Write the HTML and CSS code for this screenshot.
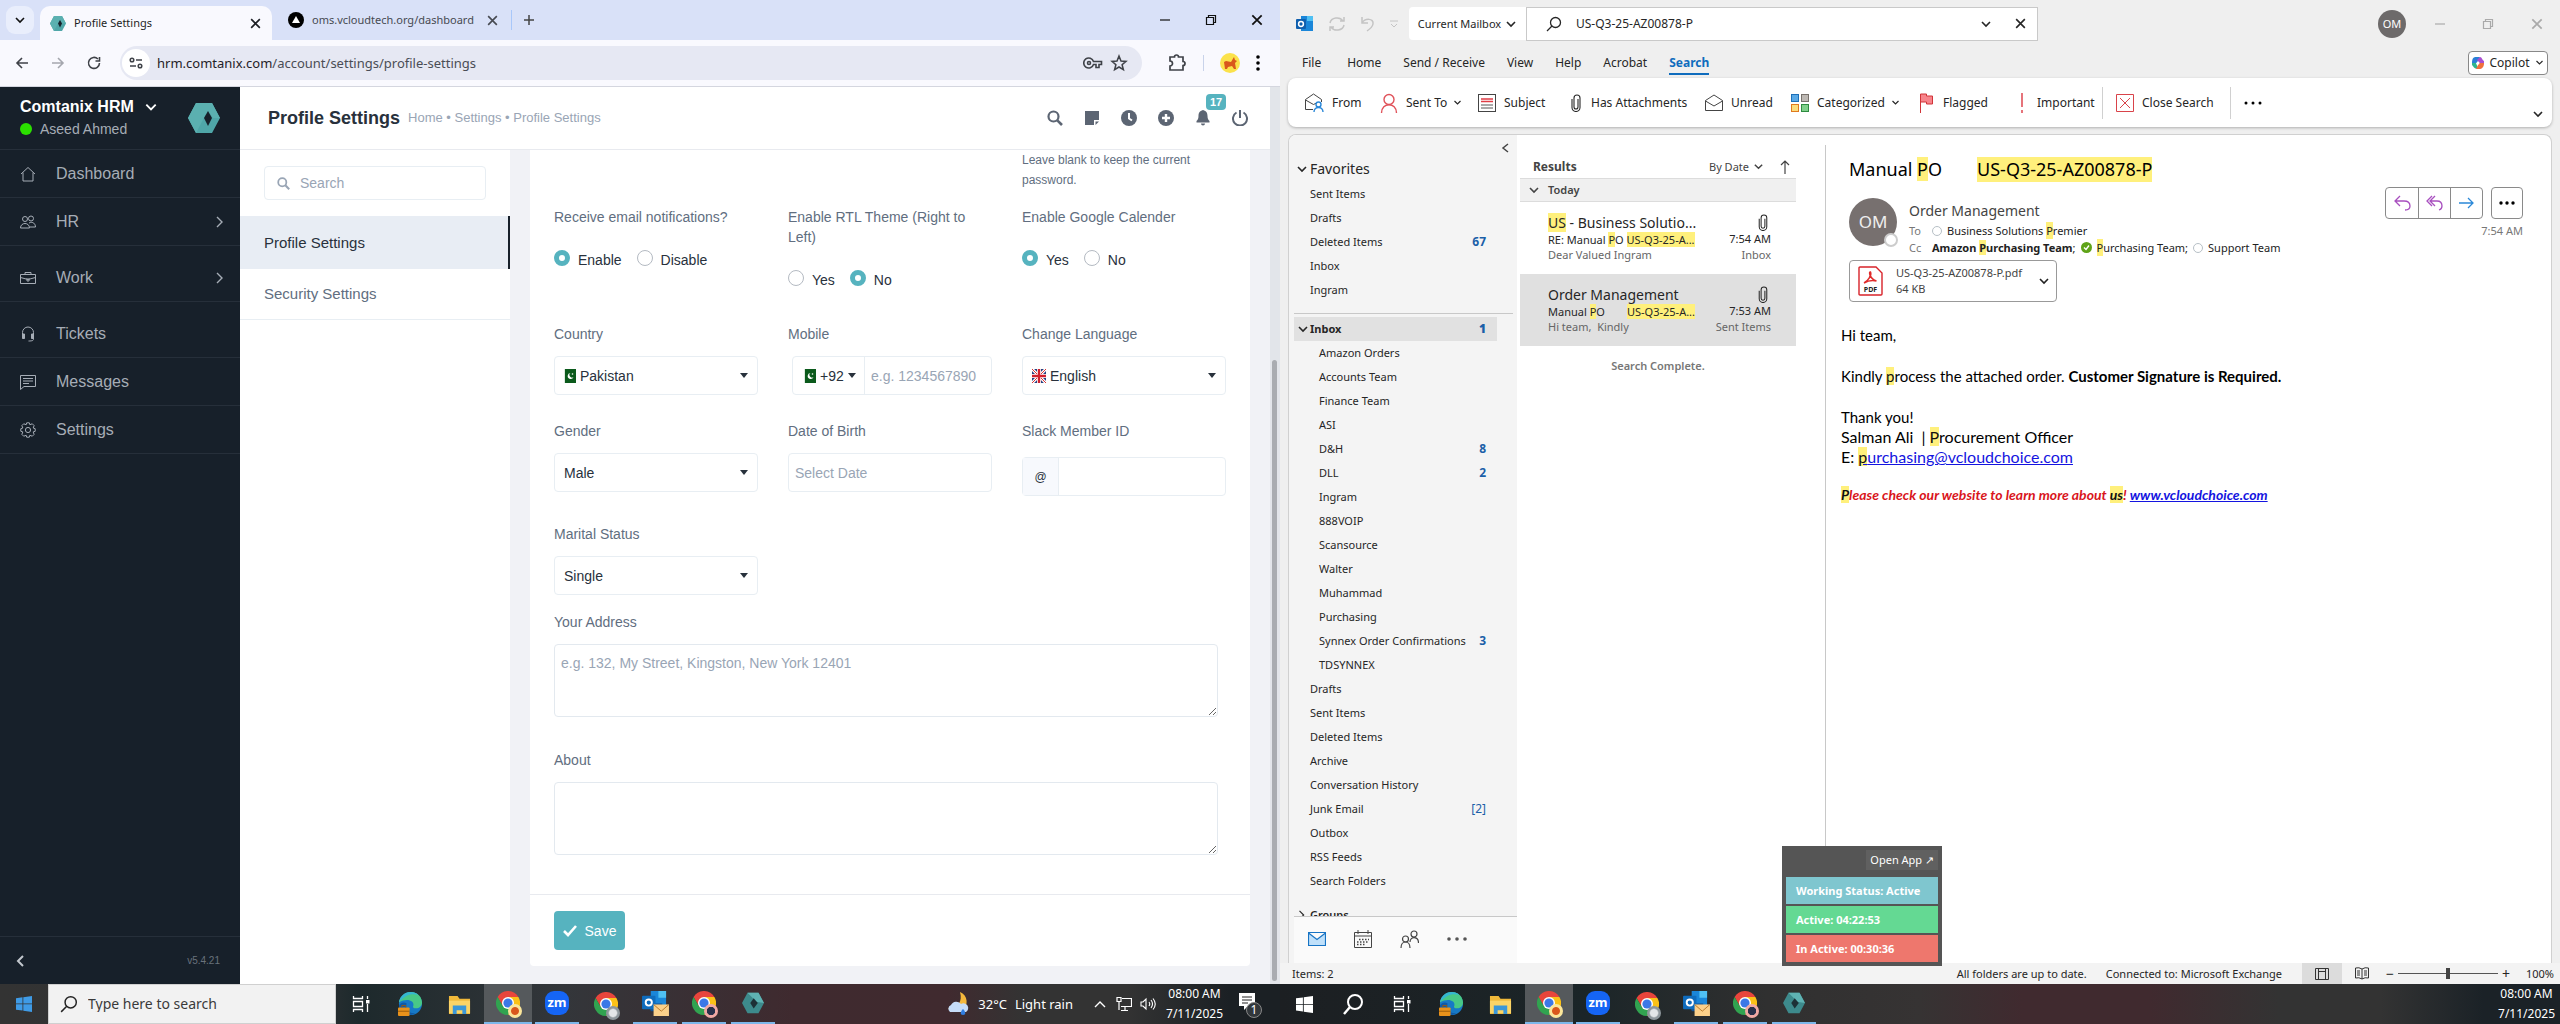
FILE: index.html
```html
<!DOCTYPE html>
<html lang="en">
<head>
<meta charset="utf-8">
<title>Profile Settings</title>
<link rel="stylesheet" href="styles.css">
</head>
<body>
<svg class="sprite" aria-hidden="true">
  <symbol id="i-down" viewBox="0 0 12 12"><path d="M2 4l4 4 4-4" fill="none" stroke="currentColor" stroke-width="1.6"/></symbol>
  <symbol id="i-right" viewBox="0 0 12 12"><path d="M3 1l5 5-5 5" fill="none" stroke="currentColor" stroke-width="1.4"/></symbol>
  <symbol id="i-left" viewBox="0 0 12 12"><path d="M8 1L3 6l5 5" fill="none" stroke="currentColor" stroke-width="2"/></symbol>
  <symbol id="i-caret" viewBox="0 0 8 5"><path d="M0 0h8L4 5z" fill="currentColor"/></symbol>
  <symbol id="i-x" viewBox="0 0 12 12"><path d="M2 2l8 8M10 2l-8 8" fill="none" stroke="currentColor" stroke-width="1.5"/></symbol>
  <symbol id="i-min" viewBox="0 0 12 12"><path d="M1 6h10" stroke="currentColor" stroke-width="1.2"/></symbol>
  <symbol id="i-max" viewBox="0 0 12 12"><path d="M1.500 3.500h7v7h-7zM3.500 3.500v-2h7v7h-2" fill="none" stroke="currentColor" stroke-width="1.2"/></symbol>
  <symbol id="i-hex" viewBox="0 0 32 30"><path d="M8 0h16l8 15-8 15H8L0 15z" fill="#4fa6a8"/><path d="M8 0h16l8 15-7 0-5-7-4 7-8 15L0 15z" fill="#5bb0b0"/><path d="M20 8l4 7-4 8-4-8z" fill="#17202a"/></symbol>
  <symbol id="i-hex-task" viewBox="0 0 32 30"><path d="M8 0h16l8 15-8 15H8L0 15z" fill="#3d8a8c"/><path d="M8 0h16l8 15-12-2-4-5z" fill="#5fb3b3"/><path d="M17 8l6 7-6 8-5-8z" fill="#1d3036"/></symbol>
  <symbol id="i-search" viewBox="0 0 16 16"><circle cx="6.500" cy="6.500" r="5" fill="none" stroke="currentColor" stroke-width="2.200"/><path d="M10.300 10.300l4.700 4.700" stroke="currentColor" stroke-width="2.600"/></symbol>
  <symbol id="i-lens" viewBox="0 0 16 16"><circle cx="9.500" cy="6.500" r="5" fill="none" stroke="currentColor" stroke-width="1.300"/><path d="M6 10l-5 5" stroke="currentColor" stroke-width="1.300"/></symbol>
  <symbol id="i-chrome" viewBox="0 0 24 24"><path d="M1.600 6A12 12 0 0 1 22.400 6H12L6.800 15z" fill="#e8453c"/><path d="M22.400 6A12 12 0 0 1 12 24l5.200-9L12 6z" fill="#fbc116"/><path d="M1.600 6A12 12 0 0 0 12 24l5.200-9H6.800z" fill="#31a350"/><circle cx="12" cy="12" r="6" fill="#fff"/><circle cx="12" cy="12" r="4.600" fill="#3b78e7"/></symbol>
  <symbol id="i-taskview" viewBox="0 0 18 18"><path d="M1.500 1v2.500h9V1M1.500 6.500h9v5h-9zM1.500 17v-2.500h9V17M15.500 1v3M15.500 9v8" fill="none" stroke="#fff" stroke-width="1.300"/><rect x="14" y="5" width="3.500" height="3.500" fill="#fff"/></symbol>
  <symbol id="i-edge" viewBox="0 0 26 26"><circle cx="13" cy="12" r="12" fill="#1779c6"/><path d="M1 11C2 4 8 0 13 0c8 0 12 6 12 11 0 4-3 6-6 6s-4-1-3-3c1-5-7-8-15-3z" fill="#48c887"/><path d="M1 11C2 4 8 0 13 0c3 0 6 1 8 3-7-2-14 0-20 8z" fill="#35b6d2"/><path d="M9 12c-2 6 3 11 9 10-6 4-16 1-17-8 2-3 5-4 8-2z" fill="#0f5aa8"/><rect x="0" y="16" width="12" height="9" rx="1" fill="#e8921b"/><path d="M4 16v-2h4v2M0 20h12" stroke="#9a5a0a" fill="none"/></symbol>
  <symbol id="i-files" viewBox="0 0 24 24"><path d="M1 3h9l2 3h11v16H1z" fill="#f0b93a"/><path d="M1 8h22v13H1z" fill="#fbd467"/><path d="M5 13h14v9h-4v-4H9v4H5z" fill="#3b97d8"/></symbol>
  <symbol id="i-outlook-task" viewBox="0 0 28 26"><rect x="9" y="0" width="16" height="20" fill="#1a86d9"/><rect x="17" y="0" width="8" height="7" fill="#4fc0f3"/><rect x="9" y="13" width="12" height="8" fill="#124f91"/><rect x="0" y="5" width="14" height="14" rx="1" fill="#0f6cbd"/><circle cx="7" cy="12" r="3.200" fill="none" stroke="#fff" stroke-width="2"/><rect x="12" y="14" width="16" height="12" fill="#fbd08a"/><path d="M12 14l8 7 8-7" fill="none" stroke="#b97a2c"/></symbol>
  <symbol id="i-pk" viewBox="0 0 12 14"><rect width="12" height="14" fill="#0b5a1c"/><rect width="1" height="14" fill="#dfe9e0"/><path d="M6.500 4a3 3 0 1 0 3 4 2.500 2.500 0 1 1-3-4z" fill="#fff"/><circle cx="8.500" cy="5" r=".8" fill="#fff"/></symbol>
  <symbol id="i-uk" viewBox="0 0 14 14"><rect width="14" height="14" fill="#27407f"/><path d="M0 0l14 14M14 0L0 14" stroke="#fff" stroke-width="3"/><path d="M0 0l14 14M14 0L0 14" stroke="#d33" stroke-width="1"/><path d="M7 0v14M0 7h14" stroke="#fff" stroke-width="4"/><path d="M7 0v14M0 7h14" stroke="#d0202e" stroke-width="2.400"/></symbol>
  <symbol id="i-clip" viewBox="0 0 10 18"><path d="M7 5v8a2 2 0 0 1-4 0V4a3 3 0 0 1 6 0v9.500a4 4 0 0 1-8 0V5" fill="none" stroke="currentColor" stroke-width="1.100"/></symbol>
  <symbol id="i-win" viewBox="0 0 16 16"><path d="M0 2.200l6.500-.9v6.200H0zM7.300 1.200L16 0v7.500H7.300zM0 8.300h6.500v6.300L0 13.700zM7.300 8.300H16V16l-8.700-1.200z" fill="currentColor"/></symbol>
</svg>

<div class="desktop">
  <!-- Left monitor: browser -->
  <section class="monitor">
    <div class="browser">
      <div class="tabstrip">
        <button class="tab-search" aria-label="Search tabs"><svg width="12" height="12"><use href="#i-down"/></svg></button>
        <div class="tab active">
          <svg width="16" height="15"><use href="#i-hex"/></svg>
          <span class="tab-title">Profile Settings</span>
          <svg width="13" height="13"><use href="#i-x"/></svg>
        </div>
        <div class="tab">
          <svg width="16" height="16" viewBox="0 0 16 16"><circle cx="8" cy="8" r="8" fill="#000"/><path d="M8 4l4 7H4z" fill="#fff"/></svg>
          <span class="tab-title">oms.vcloudtech.org/dashboard</span>
          <svg width="13" height="13"><use href="#i-x"/></svg>
        </div>
        <button class="new-tab" aria-label="New tab"><svg width="12" height="12" viewBox="0 0 12 12"><path d="M6 1v10M1 6h10" stroke="currentColor" stroke-width="1.500"/></svg></button>
        <div class="win-controls">
          <button aria-label="Minimize"><svg width="12" height="12"><use href="#i-min"/></svg></button>
          <button aria-label="Restore"><svg width="12" height="12"><use href="#i-max"/></svg></button>
          <button aria-label="Close"><svg width="14" height="14"><use href="#i-x"/></svg></button>
        </div>
      </div>
      <div class="toolbar">
        <button aria-label="Back"><svg width="16" height="16" viewBox="0 0 16 16"><path d="M14 8H3M8 3L3 8l5 5" fill="none" stroke="currentColor" stroke-width="1.600"/></svg></button>
        <button class="dim" aria-label="Forward"><svg width="16" height="16" viewBox="0 0 16 16"><path d="M2 8h11M8 3l5 5-5 5" fill="none" stroke="currentColor" stroke-width="1.600"/></svg></button>
        <button aria-label="Reload"><svg width="16" height="16" viewBox="0 0 16 16"><path d="M13.500 8a5.500 5.500 0 1 1-1.600-4M13.500 2v4h-4" fill="none" stroke="currentColor" stroke-width="1.600"/></svg></button>
        <div class="omnibox">
          <span class="site-info"><svg width="14" height="14" viewBox="0 0 14 14"><g fill="none" stroke="currentColor" stroke-width="1.500"><circle cx="3" cy="4" r="1.800"/><path d="M7 4h6M1 10h6"/><circle cx="11" cy="10" r="1.800"/></g></svg></span>
          <span class="url">hrm.comtanix.com<span class="path">/account/settings/profile-settings</span></span>
          <svg class="key" width="20" height="14" viewBox="0 0 20 14"><g fill="none" stroke="currentColor" stroke-width="1.600"><path d="M10.500 5.500a5 5 0 1 0 0 3H13v3h3v-3h2.500v-3z"/><circle cx="6" cy="7" r="1.500"/></g></svg>
          <svg width="18" height="18" viewBox="0 0 18 18"><path d="M9 2l2 5 5 .4-3.900 3.300 1.300 5L9 13l-4.400 2.700 1.300-5L2 7.400 7 7z" fill="none" stroke="currentColor" stroke-width="1.500"/></svg>
        </div>
        <div class="toolbar-end">
          <svg width="20" height="20" viewBox="0 0 20 20"><path d="M3 4h4.500a2 2 0 0 1 4 0H16v4.500a2 2 0 0 1 0 4V17H3v-4a2.500 2.500 0 0 0 0-5z" fill="none" stroke="currentColor" stroke-width="1.700"/></svg>
          <span class="bar"></span>
          <svg width="20" height="20" viewBox="0 0 20 20"><circle cx="10" cy="10" r="10" fill="#fbe24c"/><path d="M4 9l2-1 5 1 3-5 1 3 2 1-2 2 1 6h-2l-2-3-4 1-1 2H5z" fill="#d9571c"/></svg>
          <svg width="4" height="18" viewBox="0 0 4 18"><circle cx="2" cy="3" r="1.800"/><circle cx="2" cy="9" r="1.800"/><circle cx="2" cy="15" r="1.800"/></svg>
        </div>
      </div>

      <div class="page">
        <aside class="sidebar">
          <div class="brand">
            <div>
              <div class="brand-name">Comtanix HRM <svg width="14" height="14"><use href="#i-down"/></svg></div>
              <div class="brand-user"><span class="online"></span>Aseed Ahmed</div>
            </div>
            <svg width="32" height="30"><use href="#i-hex"/></svg>
          </div>
          <nav class="menu">
            <a href="#"><svg width="16" height="16" viewBox="0 0 16 16"><path d="M1 8l7-6.500L15 8M3 6.500V15h10V6.500" /></svg>Dashboard</a>
            <a href="#"><svg width="16" height="16" viewBox="0 0 16 16"><circle cx="5" cy="5" r="2.500"/><circle cx="11" cy="4.500" r="2.500"/><path d="M.5 14c0-6 9-6 9 0zM9 9c4-2 6.500 1 6.500 4H10"/></svg>HR<svg class="go" width="12" height="12"><use href="#i-right"/></svg></a>
            <a class="spaced" href="#"><svg width="16" height="16" viewBox="0 0 16 16"><path d="M.5 4.500h15v9H.5zM5 4.500v-2h6v2M.5 7.500l7.500 2 7.500-2M7 8v3h2V8"/></svg>Work<svg class="go" width="12" height="12"><use href="#i-right"/></svg></a>
            <a class="spaced" href="#"><svg width="16" height="16" viewBox="0 0 16 16"><path d="M2.500 8V6.500a5.500 5.500 0 0 1 11 0V13c0 1.500-1 2-5 2"/><path d="M2.500 8h2v4.500h-2zM11.500 8h2v4.500h-2z" fill="currentColor"/></svg>Tickets</a>
            <a href="#"><svg width="16" height="16" viewBox="0 0 16 16"><path d="M.5 1.500h15v11H4l-3.500 3zM3 4.500h10M3 7h10M3 9.500h6"/></svg>Messages</a>
            <a href="#"><svg width="16" height="16" viewBox="0 0 16 16"><circle cx="8" cy="8" r="2.600"/><path d="M6.700.8h2.600l.5 1.900 2.500-.9 1.800 1.800-.9 2.400 2 .7v2.600l-2 .6.900 2.500-1.800 1.800-2.500-.9-.5 1.900H6.700l-.5-1.900-2.500.9-1.800-1.800.9-2.500-2-.6V6.700l2-.7-.9-2.400 1.800-1.800 2.500.9z"/></svg>Settings</a>
          </nav>
          <div class="side-foot"><svg width="14" height="12"><use href="#i-left"/></svg><span>v5.4.21</span></div>
        </aside>

        <div class="content">
          <header class="page-head">
            <h1>Profile Settings</h1>
            <span class="crumbs">Home • Settings • Profile Settings</span>
            <div class="head-icons">
              <svg width="16" height="16"><use href="#i-search"/></svg>
              <svg width="16" height="16" viewBox="0 0 16 16"><path d="M1 1h14v9h-5v5H1z" fill="currentColor"/><path d="M11.500 11.500H15L11.500 15z" fill="currentColor"/></svg>
              <svg width="16" height="16" viewBox="0 0 16 16"><circle cx="8" cy="8" r="8" fill="currentColor"/><path d="M8 3v5.500l3 2" fill="none" stroke="#fff" stroke-width="2"/></svg>
              <svg width="16" height="16" viewBox="0 0 16 16"><circle cx="8" cy="8" r="8" fill="currentColor"/><path d="M8 4v8M4 8h8" stroke="#fff" stroke-width="2.400"/></svg>
              <span class="bell"><svg width="16" height="16" viewBox="0 0 16 16"><path d="M8 0c3.500 1 4.500 3 4.500 6 0 3 1 4 2 5v1.500h-13V11c1-1 2-2 2-5 0-3 1-5 4.500-6zM6 13.500h4a2 2 0 0 1-4 0z" fill="currentColor"/></svg><b>17</b></span>
              <svg width="16" height="16" viewBox="0 0 16 16"><path d="M4.500 2.500a7 7 0 1 0 7 0M8 0v8" fill="none" stroke="currentColor" stroke-width="2"/></svg>
            </div>
          </header>
          <div class="body">
            <aside class="subnav">
              <label class="subsearch"><svg width="13" height="13"><use href="#i-search"/></svg><input type="text" placeholder="Search" aria-label="Search settings"></label>
              <a class="current" href="#">Profile Settings</a>
              <a href="#">Security Settings</a>
            </aside>
            <form class="card">
              <div class="grid">
                <p class="hint">Leave blank to keep the current password.</p>
                <fieldset>
                  <legend>Receive email notifications?</legend>
                  <div class="radios"><label><input type="radio" name="mail" checked>Enable</label><label><input type="radio" name="mail">Disable</label></div>
                </fieldset>
                <fieldset>
                  <legend>Enable RTL Theme (Right to Left)</legend>
                  <div class="radios"><label><input type="radio" name="rtl">Yes</label><label><input type="radio" name="rtl" checked>No</label></div>
                </fieldset>
                <fieldset>
                  <legend>Enable Google Calender</legend>
                  <div class="radios"><label><input type="radio" name="cal" checked>Yes</label><label><input type="radio" name="cal">No</label></div>
                </fieldset>
                <div class="field"><label for="country">Country</label>
                  <div class="control"><svg width="12" height="14"><use href="#i-pk"/></svg><select id="country"><option>Pakistan</option></select><svg width="8" height="5"><use href="#i-caret"/></svg></div></div>
                <div class="field"><label for="mobile">Mobile</label>
                  <div class="control phone"><span class="code"><svg width="12" height="14"><use href="#i-pk"/></svg><select aria-label="Country code"><option>+92</option></select><svg width="8" height="5"><use href="#i-caret"/></svg></span><input id="mobile" type="text" placeholder="e.g. 1234567890"></div></div>
                <div class="field"><label for="lang">Change Language</label>
                  <div class="control"><svg width="14" height="14"><use href="#i-uk"/></svg><select id="lang"><option>English</option></select><svg width="8" height="5"><use href="#i-caret"/></svg></div></div>
                <div class="field tall"><label for="gender">Gender</label>
                  <div class="control"><select id="gender"><option>Male</option></select><svg width="8" height="5"><use href="#i-caret"/></svg></div></div>
                <div class="field tall"><label for="dob">Date of Birth</label>
                  <div class="control tight"><input id="dob" type="text" placeholder="Select Date"></div></div>
                <div class="field tall slack"><label for="slack">Slack Member ID</label>
                  <div class="control at"><span>@</span><input id="slack" type="text"></div></div>
                <div class="field"><label for="marital">Marital Status</label>
                  <div class="control"><select id="marital"><option>Single</option></select><svg width="8" height="5"><use href="#i-caret"/></svg></div></div>
              </div>
              <div class="area"><label for="address">Your Address</label><textarea id="address" placeholder="e.g. 132, My Street, Kingston, New York 12401"></textarea></div>
              <div class="area"><label for="about">About</label><textarea id="about"></textarea></div>
              <div class="card-foot"><button type="button" class="save"><svg width="14" height="12" viewBox="0 0 14 12"><path d="M1 6l4 4 8-9" fill="none" stroke="#fff" stroke-width="2.600"/></svg>Save</button></div>
            </form>
          </div>
        </div>
        <div class="scrollbar"><span></span></div>
      </div>
    </div>
    <footer class="taskbar">
      <button class="task start" aria-label="Start"><svg width="16" height="18"><use href="#i-win"/></svg></button>
      <label class="task-search"><svg width="18" height="18"><use href="#i-lens"/></svg><input type="text" placeholder="Type here to search" aria-label="Search Windows"></label>
      <div class="apps after-search">
        <button class="task" aria-label="Task view"><svg width="18" height="18"><use href="#i-taskview"/></svg></button>
        <button class="task" aria-label="Edge"><svg width="25" height="25"><use href="#i-edge"/></svg></button>
        <button class="task" aria-label="File Explorer"><svg width="23" height="23"><use href="#i-files"/></svg></button>
        <button class="task open now" aria-label="Chrome"><svg width="24" height="24"><use href="#i-chrome"/></svg><i class="dot corgi"></i></button>
        <button class="task open" aria-label="Zoom"><span class="zm">zm</span></button>
        <button class="task" aria-label="Chrome, work"><svg width="24" height="24"><use href="#i-chrome"/></svg><i class="dot grey"></i></button>
        <button class="task open" aria-label="Outlook"><svg width="27" height="25"><use href="#i-outlook-task"/></svg></button>
        <button class="task open" aria-label="Chrome, personal"><svg width="24" height="24"><use href="#i-chrome"/></svg><i class="dot pink"></i></button>
        <button class="task open" aria-label="Comtanix"><svg width="22" height="22"><use href="#i-hex-task"/></svg></button>
      </div>
      <div class="tray">
        <svg width="24" height="24" viewBox="0 0 24 24"><path d="M14 0c8 3 9 14 2 18-5 2-11 1-14-2 9 1 15-6 12-16z" fill="#f5b83c"/><path d="M4 20a4 4 0 0 1 1-7 6 6 0 0 1 10-1 4 4 0 0 1 5 8z" fill="#c6dcf8"/><path d="M17 17c3 3 3 6 0 6s-3-3 0-6z" fill="#2f7de0"/></svg>
        <span>32°C</span><span>Light rain</span>
        <svg class="up" width="12" height="12" viewBox="0 0 12 12"><path d="M1 9l5-5 5 5" fill="none" stroke="#fff" stroke-width="1.400"/></svg>
        <svg width="16" height="16" viewBox="0 0 16 16"><path d="M6 2.500h9.500v8H5M9 10.500v4M5 14.500h7M1 1.500h4v4H1zM3 6v8" fill="none" stroke="#fff" stroke-width="1.200"/></svg>
        <svg width="16" height="16" viewBox="0 0 16 16"><path d="M1 6h2l3-3v10l-3-3H1zM9 6q1.500 2 0 4M11 4q3 4 0 8M13 2.500q4.500 5.500 0 11" fill="none" stroke="#fff" stroke-width="1.100"/></svg>
        <time>08:00 AM<br>7/11/2025</time>
        <svg class="note" width="24" height="26" viewBox="0 0 24 26"><path d="M0 0h16v13H9l-4 4v-4H0z" fill="#fff"/><path d="M3 4h10M3 7h10M3 10h6" stroke="#222"/><circle cx="15" cy="17" r="7.500" fill="#32373b" stroke="#888"/><text x="15" y="21" text-anchor="middle" class="count">1</text></svg>
      </div>
    </footer>
  </section>

  <!-- Right monitor: mail -->
  <section class="monitor right">
    <div class="mail">
      <div class="m-title">
        <div class="quick">
          <svg width="18" height="16" viewBox="0 0 18 16"><rect x="5" width="12" height="15" fill="#1a86d9"/><rect x="11" width="6" height="5" fill="#4fc0f3"/><rect y="3" width="10" height="10" rx="1" fill="#0f5fae"/><circle cx="5" cy="8" r="2.400" fill="none" stroke="#fff" stroke-width="1.500"/></svg>
          <svg width="18" height="16" viewBox="0 0 18 16"><path d="M2 7a7 6 0 0 1 13-2M16 1v4h-4M16 9a7 6 0 0 1-13 2M2 15v-4h4" fill="none" stroke="#c4c4c4" stroke-width="1.500"/></svg>
          <svg width="16" height="16" viewBox="0 0 16 16"><path d="M2 1v6h6M2 7c3-5 12-5 11 1-.5 3-3 5-6 7" fill="none" stroke="#c4c4c4" stroke-width="1.500"/></svg>
          <svg width="8" height="8" viewBox="0 0 8 8"><path d="M0 1h8M1 4l3 3 3-3" fill="none" stroke="#c4c4c4"/></svg>
        </div>
        <button class="scope">Current Mailbox <svg width="12" height="12"><use href="#i-down"/></svg></button>
        <label class="m-search"><svg width="16" height="16"><use href="#i-lens"/></svg><input type="text" value="US-Q3-25-AZ00878-P" aria-label="Search mail"><svg width="12" height="12"><use href="#i-down"/></svg><svg width="13" height="13"><use href="#i-x"/></svg></label>
        <div class="m-controls"><span class="me">OM</span><svg width="12" height="12"><use href="#i-min"/></svg><svg width="12" height="12"><use href="#i-max"/></svg><svg width="14" height="14"><use href="#i-x"/></svg></div>
      </div>
      <div class="m-tabs">
        <a class="first" href="#">File</a><a href="#">Home</a><a href="#">Send / Receive</a><a href="#">View</a><a href="#">Help</a><a href="#">Acrobat</a><a class="sel" href="#">Search</a>
        <button class="copilot"><svg width="12" height="12" viewBox="0 0 12 12"><path d="M4 0h4l-3 6H0c0-4 1-6 4-6z" fill="#2b7fd6"/><path d="M8 0c2 0 2 3 4 4v3H8L5 3z" fill="#a94fd0"/><path d="M0 6h4l2 5c-3 2-4-1-6-3z" fill="#2fb58e"/><path d="M12 6c0 4-2 6-5 6H4l3-6z" fill="#f0703c"/><circle cx="6" cy="6" r="1.500" fill="#fff"/></svg>Copilot<svg width="9" height="9"><use href="#i-down"/></svg></button>
      </div>
      <div class="ribbon">
        <button><svg width="20" height="20" viewBox="0 0 20 20"><path d="M9 16.500H1.500V6.500L9.500 1l8 5.500V9M1.500 7l8 4.500 4-2" fill="none" stroke="#444"/><circle cx="14.500" cy="11.500" r="2.500" fill="none" stroke="#2b88d8" stroke-width="1.400"/><path d="M10 19c0-6 9-6 9 0" fill="none" stroke="#2b88d8" stroke-width="1.400"/></svg>From</button>
        <button><svg width="18" height="20" viewBox="0 0 18 20"><circle cx="9" cy="6.500" r="5" fill="none" stroke="#e0525a" stroke-width="1.400"/><path d="M1.500 20c0-11 15-11 15 0" fill="none" stroke="#e0525a" stroke-width="1.400"/></svg>Sent To<svg class="mini" width="9" height="9"><use href="#i-down"/></svg></button>
        <button><svg width="18" height="18" viewBox="0 0 18 18"><rect x=".5" y=".5" width="17" height="17" fill="#fff" stroke="#444"/><path d="M3 5h12M3 7.500h12" stroke="#e03c45" stroke-width="1.500"/><path d="M3 11h12M3 14h12" stroke="#555"/></svg>Subject</button>
        <button><svg width="14" height="18"><use href="#i-clip"/></svg>Has Attachments</button>
        <button><svg width="18" height="18" viewBox="0 0 18 18"><path d="M.5 6.500L9 1l8.500 5.500v10H.5zM.5 7L9 12l8.500-5" fill="none" stroke="#444"/></svg>Unread</button>
        <button><svg width="18" height="18" viewBox="0 0 18 18"><rect x=".5" y=".5" width="7" height="7" fill="#5aa9e6" stroke="#1d6fb8"/><rect x="10.500" y=".5" width="7" height="7" fill="#bdb8b3" stroke="#77716c"/><rect x=".5" y="10.500" width="7" height="7" fill="#fbdd7d" stroke="#e07a1f"/><rect x="10.500" y="10.500" width="7" height="7" fill="#7fd08a" stroke="#2e8b40"/></svg>Categorized<svg class="mini" width="9" height="9"><use href="#i-down"/></svg></button>
        <button><svg width="24" height="20" viewBox="0 0 24 20"><path d="M9.500 20V1h6v2h6v8h-6V9h-6" fill="#f7848b" stroke="#d13438"/></svg>Flagged</button>
        <button><svg width="14" height="20" viewBox="0 0 14 20"><path d="M7 0v14M7 17v3" stroke="#e0525a" stroke-width="1.600"/></svg>Important</button>
        <button class="ruled"><svg width="18" height="18" viewBox="0 0 18 18"><path d="M.5.5h17v17H.5zM4 4l10 10M14 4L4 14" fill="none" stroke="#d9434a"/></svg>Close Search</button>
        <button class="ruled" aria-label="More commands"><svg width="18" height="4" viewBox="0 0 18 4"><circle cx="2" cy="2" r="1.500"/><circle cx="9" cy="2" r="1.500"/><circle cx="16" cy="2" r="1.500"/></svg></button>
        <svg class="expand" width="12" height="12"><use href="#i-down"/></svg>
      </div>

      <div class="m-main">
        <nav class="folders">
          <div class="scroll">
            <div class="fold"><svg width="10" height="10" viewBox="0 0 10 10"><path d="M8 1L3 5l5 4" fill="none" stroke="#444" stroke-width="1.500"/></svg></div>
            <div class="group"><svg width="12" height="12"><use href="#i-down"/></svg>Favorites</div>
            <a href="#">Sent Items</a><a href="#">Drafts</a><a href="#">Deleted Items<b>67</b></a><a href="#">Inbox</a><a href="#">Ingram</a>
            <hr>
            <a class="inbox" href="#"><svg width="12" height="12"><use href="#i-down"/></svg>Inbox<b>1</b></a>
            <div class="sub">
              <a href="#">Amazon Orders</a><a href="#">Accounts Team</a><a href="#">Finance Team</a><a href="#">ASI</a><a href="#">D&amp;H<b>8</b></a><a href="#">DLL<b>2</b></a><a href="#">Ingram</a><a href="#">888VOIP</a><a href="#">Scansource</a><a href="#">Walter</a><a href="#">Muhammad</a><a href="#">Purchasing</a><a href="#">Synnex Order Confirmations<b>3</b></a><a href="#">TDSYNNEX</a>
            </div>
            <a href="#">Drafts</a><a href="#">Sent Items</a><a href="#">Deleted Items</a><a href="#">Archive</a><a href="#">Conversation History</a><a href="#">Junk Email<b class="light">[2]</b></a><a href="#">Outbox</a><a href="#">RSS Feeds</a><a href="#">Search Folders</a>
            <a class="groups" href="#"><svg width="10" height="10"><use href="#i-right"/></svg>Groups</a>
          </div>
          <div class="modules">
            <svg width="18" height="14" viewBox="0 0 18 14"><path d="M.5.5h17v13H.5zM.5 1L9 7.500 17.500 1" fill="#bfe0fa" stroke="#1673c4" stroke-width="1.200"/></svg>
            <svg width="18" height="18" viewBox="0 0 18 18"><path d="M.5 2.500h17v15H.5zM.5 6h17M4 0v4M14 0v4" fill="none" stroke="#444"/><path d="M5 9.500h10M3 12h12M3 14.500h8" stroke="#444" stroke-width="1.300" stroke-dasharray="1.500 1.500"/></svg>
            <svg width="19" height="18" viewBox="0 0 19 18"><g fill="none" stroke="#444" stroke-width="1.200"><circle cx="5.500" cy="9" r="3"/><path d="M1 18c0-8 9-8 9 0"/><circle cx="14" cy="4" r="3"/><path d="M10 12c0-6 8.500-6 8.500 1"/></g></svg>
            <svg width="20" height="4" viewBox="0 0 20 4" fill="#555"><circle cx="2" cy="2" r="1.800"/><circle cx="10" cy="2" r="1.800"/><circle cx="18" cy="2" r="1.800"/></svg>
          </div>
        </nav>

        <div class="list">
          <div class="list-head"><b>Results</b><span>By Date <svg width="11" height="11"><use href="#i-down"/></svg></span><svg width="10" height="14" viewBox="0 0 10 14"><path d="M5 14V1M1 5l4-4 4 4" fill="none" stroke="#444" stroke-width="1.200"/></svg></div>
          <div class="today"><svg width="12" height="12"><use href="#i-down"/></svg>Today</div>
          <article class="msg">
            <div class="brief"><h3><mark>US</mark> - Business Solutio...</h3><p>RE: Manual <mark>P</mark>O <mark>US-Q3-25-A...</mark></p><p class="prev">Dear Valued Ingram</p></div>
            <div class="meta"><svg width="10" height="17"><use href="#i-clip"/></svg><span>7:54 AM</span><em>Inbox</em></div>
          </article>
          <article class="msg chosen">
            <div class="brief"><h3>Order Management</h3><p class="split"><span>Manual <mark>P</mark>O</span><mark>US-Q3-25-A...</mark></p><p class="prev">Hi team,&nbsp; Kindly</p></div>
            <div class="meta"><svg width="10" height="17"><use href="#i-clip"/></svg><span>7:53 AM</span><em>Sent Items</em></div>
          </article>
          <p class="done">Search Complete.</p>
        </div>

        <article class="reader">
          <h2><span>Manual <mark>P</mark>O</span><mark>US-Q3-25-AZ00878-P</mark></h2>
          <div class="from">
            <span class="avatar">OM<i></i></span>
            <div class="people">
              <div class="who">Order Management</div>
              <div class="to"><span class="k">To</span><i class="pres"></i>Business Solutions <mark>P</mark>remier</div>
              <div class="to"><span class="k">Cc</span><b>Amazon <mark>P</mark>urchasing Team</b>;<svg width="11" height="11" viewBox="0 0 11 11"><circle cx="5.500" cy="5.500" r="5.500" fill="#5fa318"/><path d="M3 5.500l2 2 3-4" fill="none" stroke="#fff" stroke-width="1.400"/></svg><mark>P</mark>urchasing Team;<i class="pres"></i>Support Team</div>
            </div>
            <div class="acts">
              <div class="act-row">
                <div class="trio">
                  <button aria-label="Reply"><svg width="17" height="16" viewBox="0 0 17 16"><path d="M6 1L1 6l5 5M1 6h9q6 0 6 5 0 4-5 4" fill="none" stroke="#a84fbf" stroke-width="1.300"/></svg></button>
                  <button aria-label="Reply all"><svg width="17" height="16" viewBox="0 0 17 16"><path d="M6 1L1 6l5 5M9 1L4 6l5 5M4 6h7q5 0 5 5 0 3-3 4" fill="none" stroke="#a84fbf" stroke-width="1.300"/></svg></button>
                  <button aria-label="Forward"><svg width="17" height="12" viewBox="0 0 17 12"><path d="M1 6h14M10 1l5 5-5 5" fill="none" stroke="#2b88d8" stroke-width="1.300"/></svg></button>
                </div>
                <button class="more" aria-label="More actions"><svg width="16" height="4" viewBox="0 0 16 4"><circle cx="2" cy="2" r="1.700"/><circle cx="8" cy="2" r="1.700"/><circle cx="14" cy="2" r="1.700"/></svg></button>
              </div>
              <time>7:54 AM</time>
            </div>
          </div>
          <div class="attach">
            <svg width="25" height="30" viewBox="0 0 25 30"><path d="M2 1h16l6 6v21q0 1-1 1H2q-1 0-1-1V2q0-1 1-1z" fill="#fff" stroke="#d8232a" stroke-width="1.400"/><path d="M6 17c4-2 8-8 6.500-11-2-1-1 7 6 9-4-1-9 0-12.500 2z" fill="none" stroke="#e02b2b" stroke-width="1.500"/><text x="12.500" y="26" text-anchor="middle" class="pdf">PDF</text></svg>
            <div class="file">US-Q3-25-AZ00878-P.pdf<br>64 KB</div>
            <svg width="12" height="12"><use href="#i-down"/></svg>
          </div>
          <div class="letter">
            <p class="gap">Hi team,</p>
            <p class="gap">Kindly <mark>p</mark>rocess the attached order. <b>Customer Signature is Required.</b></p>
            <p>Thank you!</p>
            <p class="sign-off">Salman Ali &nbsp;| <mark>P</mark>rocurement Officer</p>
            <p class="sign-off">E: <a href="#"><mark>p</mark>urchasing@vcloudchoice.com</a></p>
            <p class="promo"><mark>P</mark>lease check our website to learn more about <mark>us</mark>! <a href="#">www.vcloudchoice.com</a></p>
          </div>
        </article>
      </div>

      <div class="status">
        <span>Items: 2</span>
        <span class="push">All folders are up to date.</span>
        <span class="conn">Connected to: Microsoft Exchange</span>
        <span class="view on"><svg width="14" height="12" viewBox="0 0 14 12"><path d="M.5.5h13v11H.5zM3.500.5v11M10.500.5v11M3.500 3.500h7" fill="none" stroke="#333"/></svg></span>
        <span class="view"><svg width="14" height="13" viewBox="0 0 14 13"><path d="M7 2Q4 0 .5 1v10q3.500-1 6.500 1 3-2 6.500-1V1Q10 0 7 2zv10M2 4h3M2 6h3M2 8h3M9 4h3M9 6h3M9 8h3" fill="none" stroke="#333"/></svg></span>
        <span class="sign">−</span><input type="range" aria-label="Zoom"><span class="sign">+</span><span class="pct">100%</span>
      </div>
    </div>
    <footer class="taskbar alt">
      <div class="apps">
        <button class="task" aria-label="Start"><svg width="17" height="17"><use href="#i-win"/></svg></button>
        <button class="task" aria-label="Search"><svg width="22" height="22" viewBox="0 0 22 22"><circle cx="13" cy="9" r="7" fill="none" stroke="#fff" stroke-width="2"/><path d="M8 14l-6 7" stroke="#fff" stroke-width="2.400"/></svg></button>
        <button class="task" aria-label="Task view"><svg width="18" height="18"><use href="#i-taskview"/></svg></button>
        <button class="task" aria-label="Edge"><svg width="25" height="25"><use href="#i-edge"/></svg></button>
        <button class="task" aria-label="File Explorer"><svg width="23" height="23"><use href="#i-files"/></svg></button>
        <button class="task open now" aria-label="Chrome"><svg width="24" height="24"><use href="#i-chrome"/></svg><i class="dot corgi"></i></button>
        <button class="task open" aria-label="Zoom"><span class="zm">zm</span></button>
        <button class="task" aria-label="Chrome, work"><svg width="24" height="24"><use href="#i-chrome"/></svg><i class="dot grey"></i></button>
        <button class="task open" aria-label="Outlook"><svg width="27" height="25"><use href="#i-outlook-task"/></svg></button>
        <button class="task open" aria-label="Chrome, personal"><svg width="24" height="24"><use href="#i-chrome"/></svg><i class="dot pink"></i></button>
        <button class="task open" aria-label="Comtanix"><svg width="22" height="22"><use href="#i-hex-task"/></svg></button>
      </div>
      <div class="tray"><time>08:00 AM<br>7/11/2025</time></div>
    </footer>
    <div class="tracker">
      <button>Open App ↗</button>
      <div class="working">Working Status: Active</div>
      <div class="up">Active: 04:22:53</div>
      <div class="idle">In Active: 00:30:36</div>
    </div>
  </section>
</div>
</body>
</html>
```
FILE: styles.css
```css
* { box-sizing: border-box; }
body { margin: 0; font: 12px/16px "Noto Sans", "Open Sans", sans-serif; color: #262626; }
button, input, select, textarea { font: inherit; color: inherit; border: 0; background: none; padding: 0; margin: 0; outline: 0; }
a { color: inherit; text-decoration: none; }
h1, h2, h3, p { margin: 0; font-weight: 400; }
svg { flex: none; display: block; }
button { display: flex; align-items: center; justify-content: center; }
mark { background: #fff07c; color: inherit; }
.sprite { position: absolute; width: 0; height: 0; }

.desktop { display: grid; grid-template-columns: 1fr 1fr; min-height: 100vh; }
.monitor { display: flex; flex-direction: column; min-width: 0; position: relative; }

/* Browser chrome */
.browser { flex: 1; display: flex; flex-direction: column; background: #f9f9fe; }
.tabstrip { height: 40px; background: #d9e1f8; display: flex; align-items: center; padding-left: 6px; }
.tab-search { width: 28px; height: 28px; border-radius: 9px; background: #e9eefc; color: #111; }
.tab { display: flex; align-items: center; gap: 8px; width: 232px; height: 34px; padding: 0 10px; color: #474a52; align-self: flex-end; margin-left: 6px; font-size: 11px; }
.tab + .tab { border-right: 1px solid #a8c7fa; height: 20px; align-self: center; padding: 0 12px 0 8px; margin-left: 8px; }
.tab.active { background: #f9f9fe; border-radius: 10px 10px 0 0; color: #1d1f25; }
.tab-title { flex: 1; white-space: nowrap; }
.new-tab { width: 34px; color: #444; }
.win-controls { margin-left: auto; display: flex; }
.win-controls button { width: 46px; height: 40px; color: #111; }
.toolbar { height: 47px; display: flex; align-items: center; padding: 0 0 1px 4px; border-bottom: 1px solid #d4d6df; color: #3f4248; }
.toolbar > button { width: 36px; }
.dim { color: #a5a7ae; }
.omnibox { flex: 1; height: 34px; margin-left: 8px; border-radius: 17px; background: #e6e8f3; display: flex; align-items: center; padding: 0 14px 0 2px; gap: 7px; }
.site-info { width: 28px; height: 28px; border-radius: 50%; background: #fff; display: flex; align-items: center; justify-content: center; }
.url { flex: 1; font-size: 13px; color: #1f2127; }
.path { color: #4a4d55; }
.toolbar-end { display: flex; align-items: center; gap: 16px; padding: 0 20px 0 25px; }
.toolbar-end .bar { width: 1px; height: 16px; background: #c9d3ea; }

/* HRM page */
.page { flex: 1; display: flex; font-family: "Liberation Sans", Arial, sans-serif; background: #f1f2f6; }
.sidebar { width: 240px; flex: none; background: #17202a; color: #a6adb6; display: flex; flex-direction: column; }
.brand { height: 63px; display: flex; justify-content: space-between; align-items: center; padding: 0 20px; border-bottom: 1px solid #262f3a; }
.brand-name { display: flex; align-items: center; gap: 10px; color: #fff; font-size: 16px; line-height: 22px; font-weight: 700; }
.brand-user { display: flex; align-items: center; gap: 8px; font-size: 14px; line-height: 22px; }
.online { width: 12px; height: 12px; border-radius: 50%; background: #2be000; }
.menu a { display: flex; align-items: center; gap: 20px; height: 48px; padding: 0 14px 0 20px; font-size: 16px; border-bottom: 1px solid #262f3a; }
.menu a svg { fill: none; stroke: currentColor; }
.menu a.spaced { height: 56px; padding-top: 8px; }
.menu .go { margin-left: auto; }
.side-foot { margin-top: auto; height: 48px; border-top: 1px solid #262f3a; display: flex; align-items: center; justify-content: space-between; padding: 0 20px 0 14px; font-size: 10px; color: #69727c; }
.side-foot svg { color: #c3c8ce; }
.content { flex: 1; display: flex; flex-direction: column; min-width: 0; }
.page-head { height: 63px; background: #fff; border-bottom: 1px solid #e8eaef; display: flex; align-items: center; gap: 8px; padding: 0 22px 0 28px; }
.page-head h1 { font-size: 18px; font-weight: 700; color: #28313c; }
.crumbs { color: #99a5b5; font-size: 13px; }
.head-icons { margin-left: auto; display: flex; gap: 21px; color: #5c6573; }
.bell { position: relative; }
.bell b { position: absolute; left: 11px; top: -16px; width: 20px; height: 16px; border-radius: 4px; background: #56b3bf; color: #fff; font-size: 11px; text-align: center; }
.body { flex: 1; display: flex; }
.subnav { width: 270px; flex: none; background: #fff; color: #616e80; }
.subsearch { display: flex; align-items: center; gap: 10px; height: 34px; margin: 16px 24px; padding: 0 12px; border: 1px solid #e8eef3; border-radius: 4px; color: #99a5b5; font-size: 14px; }
.subsearch input { width: 100%; }
input::placeholder, textarea::placeholder { color: #99a5b5; opacity: 1; }
.subnav a { display: flex; align-items: center; height: 51px; padding-left: 24px; font-size: 15px; border-bottom: 1px solid #e8eef3; }
.subnav a.current { height: 53px; background: #e8edf4; color: #28313c; border-right: 2px solid #17202a; border-bottom: 0; }
.card { flex: 1; margin: 0 20px 18px; background: #fff; border-radius: 0 0 4px 4px; font-size: 14px; line-height: 20px; color: #28313c; }
.grid { display: grid; grid-template-columns: repeat(3, 1fr); column-gap: 30px; padding: 0 24px; }
.hint { grid-column: 3; font-size: 12px; color: #616e80; height: 57px; }
fieldset { border: 0; margin: 0; padding: 0; min-width: 0; height: 117px; }
legend, .field label, .area label { padding: 0; color: #616e80; display: block; }
.radios { display: flex; gap: 15px; padding-top: 23px; }
.radios label { display: flex; align-items: center; gap: 8px; }
.radios input { appearance: none; width: 16px; height: 16px; border: 1px solid #b4bac2; border-radius: 50%; margin-top: -4px; }
.radios input:checked { border: 5px solid #56b3bf; }
.field { height: 97px; }
.field.tall { height: 103px; }
.field label { margin-bottom: 12px; }
.slack label { margin-bottom: 16px; }
.control { display: flex; align-items: center; gap: 4px; height: 39px; padding: 0 9px; border: 1px solid #e8eef3; border-radius: 4px; }
.control select { appearance: none; flex: 1; min-width: 0; }
.control input { width: 100%; min-width: 0; }
.control.tight { padding: 0 6px; }
.phone { padding: 0 0 0 11px; margin-left: 4px; }
.phone .code { display: flex; align-items: center; gap: 4px; flex: none; height: 100%; border-right: 1px solid #e8eef3; padding-right: 8px; margin-right: 2px; }
.at { padding: 0; gap: 0; }
.at span { width: 36px; height: 100%; flex: none; background: #f7f9fd; border-right: 1px solid #e8eef3; display: flex; align-items: center; justify-content: center; font-size: 12px; }
.area { padding: 0 32px 0 24px; }
.area + .area { margin-top: 33px; }
.area label { margin-bottom: 12px; }
textarea { display: block; width: 100%; height: 73px; border: 1px solid #e3e9ef; border-radius: 4px; padding: 8px 6px; }
.grid + .area { margin-top: -9px; }
.card-foot { margin-top: 39px; border-top: 1px solid #e8eaef; padding: 16px 24px; }
.save { width: 71px; height: 39px; gap: 8px; background: #56b3bf; color: #fff; border-radius: 4px; }
.scrollbar { width: 10px; flex: none; background: #e2e5ea; padding: 273px 3px 3px 2px; display: flex; }
.scrollbar span { flex: 1; background: #a9acb1; border-radius: 3px; }

/* Taskbars */
.taskbar { height: 40px; display: flex; color: #fff; background: linear-gradient(90deg, #333 0, #2f3234 24%, #1d292c 28%, #33363a 44%, #3f2a2f 62%, #402a2f 74%, #333 80%, #333 88%, #1b2024 96%); }
.taskbar.alt { background: linear-gradient(90deg, #1c1f22 0, #1b2528 24%, #303030 38%, #363333 50%, #402a2f 58%, #402a2f 68%, #333 78%, #333 86%, #1b2227 94%); }
.task { width: 48px; height: 40px; position: relative; color: #fff; }
.start { color: #3f9be6; }
.task-search { width: 288px; height: 40px; display: flex; align-items: center; gap: 10px; padding: 0 11px; background: #f2f2f2; border: 1px solid #d0d0d0; color: #222; font-size: 14px; }
.task-search input { width: 100%; }
.task-search input::placeholder { color: #3a3a3a; }
.apps { display: flex; gap: 1px; }
.after-search { margin-left: 1px; }
.open { border-bottom: 2px solid transparent; border-image: linear-gradient(90deg, transparent 4px, #7db7ea 4px, #7db7ea 44px, transparent 44px) 2; }
.now { background: #55595c; border-image: linear-gradient(#7db7ea, #7db7ea) 2; }
.dot { position: absolute; right: 10px; bottom: 4px; width: 14px; height: 14px; border-radius: 50%; }
.corgi { background: radial-gradient(#d9571c 35%, #fbe69a 45%); }
.grey { background: radial-gradient(#e3e6e8 35%, #8e979c 50%); }
.pink { background: radial-gradient(#28304a 40%, #f1a9a4 45%); }
.zm { width: 24px; height: 24px; border-radius: 9px; background: #1565f5; font: 700 13px/22px "Open Sans", sans-serif; }
.tray { margin-left: auto; display: flex; align-items: center; gap: 8px; padding-right: 17px; font-size: 13px; white-space: nowrap; }
.tray .up { margin-left: 13px; margin-right: 2px; }
.tray time { font-size: 12px; line-height: 20px; text-align: center; margin-left: 2px; }
.tray .note { margin-left: 8px; margin-top: 4px; }
.alt .tray { padding-right: 5px; }
.count { fill: #fff; font-size: 12px; }

/* Mail */
.mail { flex: 1; display: flex; flex-direction: column; background: #efefef; }
.m-title { height: 47px; display: flex; align-items: center; padding: 0 16px; }
.quick { display: flex; align-items: center; gap: 14px; width: 113px; }
.scope { width: 117px; height: 33px; background: #fff; gap: 4px; font-size: 11px; border-radius: 4px 0 0 4px; }
.m-search { width: 512px; height: 34px; background: #fff; border: 1px solid #c9c9c9; display: flex; align-items: center; gap: 14px; padding: 0 10px 0 19px; }
.m-search input { flex: 1; }
.m-search svg:last-child { margin-left: 8px; }
.m-controls { margin-left: auto; display: flex; align-items: center; gap: 36px; color: #aaa; }
.me { width: 28px; height: 28px; border-radius: 50%; background: #6d6a6a; color: #fff; text-align: center; line-height: 28px; font-size: 11px; margin-right: -8px; }
.m-tabs { height: 31px; display: flex; align-items: center; gap: 22px; padding: 3px 12px 3px 22px; }
.m-tabs a { height: 24px; line-height: 24px; }
.m-tabs .first { margin-right: 4px; }
.sel { color: #0f6cbd; font-weight: 700; box-shadow: inset 0 -2px #0f6cbd; }
.copilot { margin-left: auto; width: 80px; height: 24px; gap: 5px; background: #fff; border: 1px solid #888; border-radius: 4px; }
.ribbon { height: 49px; margin: 0 8px; background: #fff; border-radius: 8px; box-shadow: 0 1px 3px #0004; display: grid; grid-template-columns: 76px 98px 91px 136px 86px 120px 104px 87px 128px 60px 1fr; padding: 0 16px; align-items: center; }
.ribbon button { justify-content: flex-start; gap: 8px; height: 32px; white-space: nowrap; }
.ribbon .mini { margin-left: -2px; }
.ribbon .ruled { border-left: 1px solid #d0d0d0; padding-left: 13px; }
.expand { justify-self: end; margin: 22px -8px 0 0; }
.m-main { flex: 1; margin: 7px 8px 0; background: #fff; border: 1px solid #d0d0d0; border-bottom: 0; border-radius: 8px 8px 0 0; display: flex; overflow: hidden; }
.folders { width: 228px; flex: none; background: #f4f4f4; display: flex; flex-direction: column; padding-left: 5px; font-size: 11px; }
.scroll { height: 781px; overflow: hidden; }
.fold { height: 21px; display: flex; justify-content: flex-end; padding: 8px 7px 0; }
.group { display: flex; align-items: center; gap: 2px; height: 26px; padding-left: 2px; font-size: 14px; }
.folders a { display: flex; align-items: center; height: 24px; padding-left: 16px; margin-right: 20px; white-space: nowrap; }
.folders a b { margin-left: auto; margin-right: 11px; color: #1b5fa8; font-size: 12px; }
.folders b.light { font-weight: 400; }
.folders .sub a { padding-left: 25px; }
.folders hr { border: 0; border-top: 1px solid #c8c8c8; margin: 11px 4px 3px 0; }
.folders .inbox { background: #e1e1e1; padding-left: 3px; gap: 1px; font-weight: 700; }
.groups { margin-top: 10px; font-weight: 600; }
.folders .groups { padding-left: 3px; gap: 3px; }
.modules { flex: 1; background: #fafafa; border-top: 1px solid #c8c8c8; display: flex; align-items: center; gap: 28px; padding: 0 0 2px 14px; }
.list { width: 276px; flex: none; margin: 0 29px 0 3px; }
.list-head { height: 43px; display: flex; align-items: center; padding: 20px 6px 0 13px; gap: 16px; color: #444; font-size: 11px; }
.list-head b { font-size: 12px; margin-right: auto; }
.list-head span { display: flex; gap: 4px; align-items: center; }
.today { display: flex; align-items: center; gap: 8px; height: 24px; background: #f0f0f0; border: 1px solid #dcdcdc; border-width: 1px 0; padding-left: 8px; font-weight: 600; font-size: 11px; color: #444; }
.msg { height: 72px; display: flex; justify-content: space-between; padding: 12px 25px 0 28px; white-space: nowrap; font-size: 11px; }
.brief { width: 147px; }
.msg h3 { font-size: 14px; line-height: 18px; }
.msg p { line-height: 15px; }
.msg .split { display: flex; justify-content: space-between; }
.msg .prev, .meta em { color: #666; font-style: normal; }
.chosen { background: #e0e0e0; }
.meta { display: flex; flex-direction: column; align-items: flex-end; }
.meta svg { margin-right: 3px; }
.done { text-align: center; font-size: 11px; font-weight: 600; color: #777; padding-top: 12px; }
.reader { flex: 1; min-width: 0; margin-top: 10px; border-left: 1px solid #c8c8c8; padding-right: 28px; color: #222; }
.reader h2 { display: flex; gap: 35px; padding: 12px 0 0 23px; font-size: 18px; line-height: 25px; color: #000; }
.from { display: flex; padding: 5px 0 0 23px; }
.avatar { position: relative; width: 48px; height: 48px; margin-top: 11px; border-radius: 50%; background: #77706f; color: #eee; font-size: 17px; line-height: 48px; text-align: center; }
.avatar i { position: absolute; right: -1px; bottom: -1px; width: 14px; height: 14px; border-radius: 50%; background: #fff; border: 2px solid #ccc; }
.people { flex: 1; padding: 13px 0 0 12px; font-size: 11px; line-height: 17px; }
.who { font-size: 14px; line-height: 22px; color: #444; }
.to { display: flex; align-items: center; white-space: pre; }
.to .k { width: 23px; color: #777; }
.to svg, .pres { margin: 0 5px; }
.pres { width: 10px; height: 10px; border: 1px solid #b7c0c6; border-radius: 50%; }
.k + .pres { margin-left: 0; }
.act-row { display: flex; gap: 8px; }
.trio, .more { height: 32px; border: 1px solid #8a8a8a; border-radius: 4px; display: flex; }
.trio button { width: 32px; }
.trio button + button { border-left: 1px solid #8a8a8a; }
.more { width: 32px; }
.acts time { display: block; text-align: right; margin-top: 4px; font-size: 11px; color: #777; }
.attach { display: flex; align-items: center; gap: 13px; width: 208px; height: 42px; margin: 4px 0 0 23px; padding: 0 6px 0 8px; border: 1px solid #999; border-radius: 4px; font-size: 11px; white-space: nowrap; }
.file { flex: 1; min-width: 0; color: #444; }
.attach .pdf { font: 700 7px "Open Sans", sans-serif; fill: #222; }
.attach svg:last-child { margin-left: -8px; }
.letter { font: 15px/20px Lato, sans-serif; color: #000; padding: 23px 0 0 15px; }
.letter p.gap { margin-bottom: 21px; }
.letter a { color: #1414e0; text-decoration: underline; }
.letter mark { color: #111; }
.letter .sign-off { font-size: 16px; }
.letter .promo { margin-top: 18px; font-size: 14px; font-weight: 700; font-style: italic; color: #d9151c; }
.status { height: 21px; display: flex; align-items: center; background: #f3f3f3; font-size: 11px; padding: 0 6px 0 12px; }
.push { margin-left: auto; }
.conn { margin: 0 20px 0 19px; }
.view { width: 40px; height: 21px; display: flex; align-items: center; justify-content: center; }
.view.on { background: #dcdcdc; }
.sign { width: 16px; text-align: center; font-size: 14px; }
.status input { appearance: none; width: 100px; height: 1px; background: #555; }
.status input::-webkit-slider-thumb { appearance: none; width: 4px; height: 11px; background: #444; }
.pct { width: 40px; text-align: right; }
.tracker { position: absolute; left: 502px; bottom: 58px; width: 160px; background: #555; padding: 4px; display: flex; flex-direction: column; gap: 2px; color: #fff; font-weight: 700; font-size: 11px; }
.tracker button { align-self: flex-end; padding: 0 4px; height: 20px; margin-bottom: 5px; background: #606060; font-weight: 400; }
.tracker div { height: 27px; line-height: 27px; padding-left: 10px; }
.working { background: #7fc6cf; }
.tracker .up { background: #64d993; }
.idle { background: #ee776d; }
```
